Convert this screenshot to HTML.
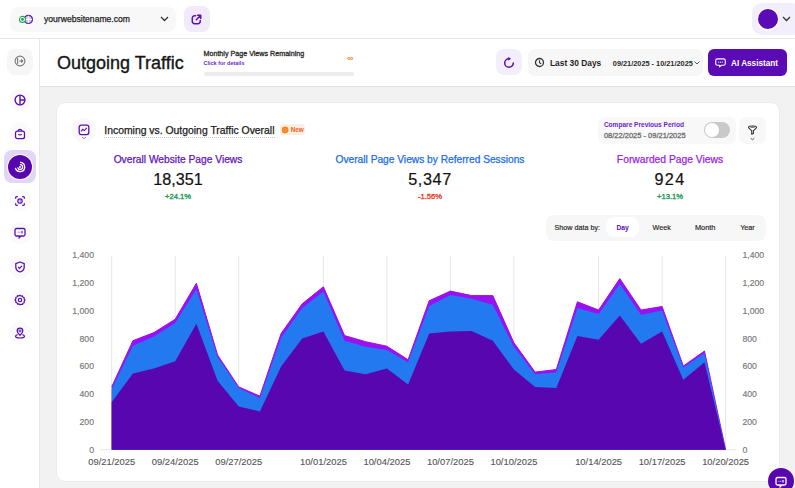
<!DOCTYPE html>
<html><head><meta charset="utf-8">
<style>
*{box-sizing:border-box;margin:0;padding:0}
html,body{width:795px;height:488px;overflow:hidden;background:#f2f2f2;font-family:"Liberation Sans",sans-serif;color:#1a1a1a}
.abs{position:absolute}
.t{position:absolute;white-space:nowrap;line-height:1}
#top{left:0;top:0;width:795px;height:39px;background:#fff;border-bottom:1px solid #e6e6e6}
#side{left:0;top:39px;width:40px;height:449px;background:#fff;border-right:1px solid #e8e8e8}
#hdr{left:40px;top:39px;width:755px;height:48px;background:#fff;border-bottom:1px solid #e3e3e3}
#card{left:56px;top:102.3px;width:723.5px;height:380px;background:#fff;border:1px solid #ececec;border-radius:9px}
</style></head><body>
<div id="top" class="abs"></div>
<div id="side" class="abs"></div>
<div id="hdr" class="abs"></div>
<div id="card" class="abs"></div>

<!-- top bar -->
<div class="abs" style="left:10px;top:6.5px;width:165.5px;height:25.8px;background:#f8f8f8;border-radius:8px"></div>
<svg class="abs" style="left:14px;top:11px" width="24" height="16" viewBox="0 0 24 16">
  <circle cx="14.4" cy="8.4" r="4" fill="#d5c2f3" stroke="#5b10b3" stroke-width="1.3"/>
  <path d="M14.4 4.6v7.6M10.6 8.4h7.6" stroke="#fff" stroke-width=".9"/>
  <circle cx="8.5" cy="8.4" r="3" fill="#fff" stroke="#22aa5a" stroke-width="1.1"/>
  <circle cx="8.5" cy="8.4" r="1.4" fill="#1a9a4c"/>
</svg>
<div class="t" style="left:44px;top:14.6px;font-size:8.6px;color:#1e1e1e;-webkit-text-stroke:.25px #1e1e1e">yourwebsitename.com</div>
<svg class="abs" style="left:160px;top:16px" width="9" height="6" viewBox="0 0 9 6"><path d="M1 1l3.5 3.5L8 1" fill="none" stroke="#333" stroke-width="1.3"/></svg>
<div class="abs" style="left:183.8px;top:6.2px;width:25.8px;height:26.2px;background:#f1eafc;border-radius:8px"></div>
<svg class="abs" style="left:191px;top:14px" width="11" height="11" viewBox="0 0 11 11"><path d="M4.6 1.8H3.6A2.3 2.3 0 0 0 1.3 4.1v3.3a2.3 2.3 0 0 0 2.3 2.3h3.3a2.3 2.3 0 0 0 2.3-2.3V6.4" fill="none" stroke="#5b10b3" stroke-width="1.5" stroke-linecap="round"/><path d="M6.6 1.3h3.1v3.1M9.5 1.5L5.3 5.7" fill="none" stroke="#5b10b3" stroke-width="1.5" stroke-linecap="round" stroke-linejoin="round"/></svg>
<div class="abs" style="left:751.6px;top:2.8px;width:50px;height:32.6px;background:#f3eefc;border-radius:10px"></div>
<div class="abs" style="left:756.8px;top:8.1px;width:22.6px;height:22.6px;border-radius:50%;background:#fff"></div>
<div class="abs" style="left:758.1px;top:9.4px;width:20px;height:20px;border-radius:50%;background:#5a0bb5"></div>
<svg class="abs" style="left:782px;top:16px" width="9" height="6" viewBox="0 0 9 6"><path d="M1 1l3.5 3.5L8 1" fill="none" stroke="#333" stroke-width="1.3"/></svg>

<!-- header -->
<div class="t" style="left:57px;top:54px;font-size:18px;color:#151515;-webkit-text-stroke:.35px #151515">Outgoing Traffic</div>
<div class="t" style="left:203.5px;top:51px;font-size:7.15px;color:#2a2a2a;-webkit-text-stroke:.3px #2a2a2a">Monthly Page Views Remaining</div>
<div class="t" style="left:203.5px;top:61px;font-size:5.5px;font-weight:700;color:#6a1fc8">Click for details</div>
<div class="t" style="left:347px;top:54px;font-size:9px;font-weight:700;color:#f08a24">∞</div>
<div class="abs" style="left:203.5px;top:72px;width:150px;height:4px;background:#ececec;border-radius:2px"></div>

<div class="abs" style="left:496.2px;top:49.4px;width:26.3px;height:26.1px;background:#f3eefc;border-radius:8px"></div>
<svg class="abs" style="left:502.4px;top:56.1px" width="14" height="14" viewBox="0 0 14 14"><path d="M7 2.7A4.3 4.3 0 1 0 11.3 7" fill="none" stroke="#5b10b3" stroke-width="1.5" stroke-linecap="round"/><path d="M6.2 1L9.2 2.7 6.2 4.4z" fill="#5b10b3"/></svg>
<div class="abs" style="left:528px;top:49px;width:175px;height:26.5px;background:#f7f7f7;border-radius:7px"></div>
<svg class="abs" style="left:533.6px;top:57px" width="11" height="11" viewBox="0 0 11 11"><circle cx="5.5" cy="5.5" r="4" fill="none" stroke="#333" stroke-width="1.3"/><path d="M5.5 3.2v2.5l1.7 1.1" fill="none" stroke="#333" stroke-width="1.1"/></svg>
<div class="t" style="left:550px;top:59px;font-size:8.4px;font-weight:700;color:#1e1e1e">Last 30 Days</div>
<div class="t" style="left:612.8px;top:59.5px;font-size:7.35px;font-weight:700;color:#2a2a2a">09/21/2025 - 10/21/2025</div>
<svg class="abs" style="left:694px;top:61px" width="6" height="4" viewBox="0 0 6 4"><path d="M.5 .5L3 3l2.5-2.5" fill="none" stroke="#444" stroke-width=".9"/></svg>
<div class="abs" style="left:708px;top:49px;width:78.5px;height:26.5px;background:#5a0bb5;border-radius:6px"></div>
<svg class="abs" style="left:714.5px;top:58px" width="11" height="10" viewBox="0 0 11 10"><path d="M2.6 .9h5.8a1.9 1.9 0 0 1 1.9 1.9v2.6a1.9 1.9 0 0 1-1.9 1.9H6.2L4.6 8.8V7.3h-2A1.9 1.9 0 0 1 .7 5.4V2.8A1.9 1.9 0 0 1 2.6.9z" fill="none" stroke="#fff" stroke-width="1.1" stroke-linejoin="round"/><circle cx="3.7" cy="4.1" r=".65" fill="#fff"/><circle cx="5.5" cy="4.1" r=".65" fill="#fff"/><circle cx="7.3" cy="4.1" r=".65" fill="#fff"/></svg>
<div class="t" style="left:731px;top:59.5px;font-size:8.2px;font-weight:700;color:#fff">AI Assistant</div>


<!-- sidebar -->
<div class="abs" style="left:7px;top:48.5px;width:26px;height:26px;background:#f6f6f6;border-radius:8px"></div>
<svg class="abs" style="left:14px;top:55px" width="12" height="12" viewBox="0 0 12 12"><circle cx="6" cy="6" r="4.9" fill="none" stroke="#7a7a7a" stroke-width="1.1"/><path d="M3.6 3v6M5.2 6h3.4M7.2 4.5L8.7 6 7.2 7.5" fill="none" stroke="#7a7a7a" stroke-width="1.1"/></svg>
<div class="abs" style="left:9px;top:88.5px;width:22px;height:22px;background:#fafafa;border-radius:50%"></div>
<svg class="abs" style="left:14px;top:93.5px" width="12" height="12" viewBox="0 0 12 12"><circle cx="6" cy="6" r="4.9" fill="none" stroke="#5b10b3" stroke-width="1.4"/><path d="M6 1v10M6 6h5" fill="none" stroke="#5b10b3" stroke-width="1.4"/></svg>
<div class="abs" style="left:9px;top:122.5px;width:22px;height:22px;background:#fafafa;border-radius:50%"></div>
<svg class="abs" style="left:14px;top:127.5px" width="12" height="12" viewBox="0 0 12 12"><rect x="1.5" y="3.2" width="9" height="7.5" rx="2" fill="none" stroke="#5b10b3" stroke-width="1.3"/><path d="M4.2 3.2a1.8 1.8 0 0 1 3.6 0M4.3 6.3q1.7 1.3 3.4 0" fill="none" stroke="#5b10b3" stroke-width="1.2"/></svg>
<div class="abs" style="left:4px;top:150.3px;width:31.6px;height:33px;background:#e2d6f7;border-radius:8px"></div>
<div class="abs" style="left:6.8px;top:153.6px;width:26px;height:26px;background:#fff;border-radius:50%"></div>
<div class="abs" style="left:7.8px;top:154.6px;width:24px;height:24px;background:#5806b0;border-radius:50%"></div>
<svg class="abs" style="left:13px;top:159.6px" width="14" height="14" viewBox="0 0 14 14"><path d="M7.6 2.3A4.7 4.7 0 1 1 2.5 8.4" fill="none" stroke="#fff" stroke-width="1.35" stroke-linecap="round"/><path d="M7.4 4.7A2.4 2.4 0 1 1 4.9 7.8" fill="none" stroke="#fff" stroke-width="1.3" stroke-linecap="round"/><circle cx="7" cy="7" r="1" fill="#fff"/></svg>
<div class="abs" style="left:9px;top:189px;width:22px;height:22px;background:#fafafa;border-radius:50%"></div>
<svg class="abs" style="left:14px;top:194.5px" width="12" height="12" viewBox="0 0 12 12"><g transform="translate(6 6) scale(.88) translate(-6 -6)"><path d="M1 3.5V2.2A1.2 1.2 0 0 1 2.2 1H3.5M8.5 1h1.3A1.2 1.2 0 0 1 11 2.2V3.5M11 8.5v1.3A1.2 1.2 0 0 1 9.8 11H8.5M3.5 11H2.2A1.2 1.2 0 0 1 1 9.8V8.5" fill="none" stroke="#5b10b3" stroke-width="1.45"/><circle cx="6" cy="6" r="2.5" fill="none" stroke="#5b10b3" stroke-width="1.4"/><path d="M6 4.8v1.3l.8.5" fill="none" stroke="#5b10b3" stroke-width=".8"/></g></svg>
<div class="abs" style="left:9px;top:221.5px;width:22px;height:22px;background:#fafafa;border-radius:50%"></div>
<svg class="abs" style="left:14px;top:226.5px" width="12" height="12" viewBox="0 0 12 12"><path d="M2.5 1.5h7a1.5 1.5 0 0 1 1.5 1.5v4.5a1.5 1.5 0 0 1-1.5 1.5H6.8L5.2 10.8V9H2.5A1.5 1.5 0 0 1 1 7.5V3a1.5 1.5 0 0 1 1.5-1.5z" fill="none" stroke="#5b10b3" stroke-width="1.3"/><path d="M3.8 5.2h.6M5.6 5.2h.6M8 4v2.4" stroke="#5b10b3" stroke-width="1.1"/></svg>
<div class="abs" style="left:9px;top:255.5px;width:22px;height:22px;background:#fafafa;border-radius:50%"></div>
<svg class="abs" style="left:14px;top:260.5px" width="12" height="12" viewBox="0 0 12 12"><path d="M6 1L10.2 2.6V6C10.2 8.4 8.4 10.2 6 11 3.6 10.2 1.8 8.4 1.8 6V2.6z" fill="none" stroke="#5b10b3" stroke-width="1.3" stroke-linejoin="round"/><path d="M4.2 6l1.3 1.3 2.4-2.4" fill="none" stroke="#5b10b3" stroke-width="1.2"/></svg>
<div class="abs" style="left:9px;top:288.5px;width:22px;height:22px;background:#fafafa;border-radius:50%"></div>
<svg class="abs" style="left:14px;top:293.5px" width="12" height="12" viewBox="0 0 12 12"><path d="M6 1.2l1.1.9 1.4-.2.5 1.3 1.3.5-.2 1.4.9 1.1-.9 1.1.2 1.4-1.3.5-.5 1.3-1.4-.2L6 10.8l-1.1-.9-1.4.2-.5-1.3-1.3-.5.2-1.4L1 6l.9-1.1-.2-1.4 1.3-.5.5-1.3 1.4.2z" fill="none" stroke="#5b10b3" stroke-width="1.2" stroke-linejoin="round"/><circle cx="6" cy="6" r="1.7" fill="none" stroke="#5b10b3" stroke-width="1.2"/></svg>
<div class="abs" style="left:9px;top:322px;width:22px;height:22px;background:#fafafa;border-radius:50%"></div>
<svg class="abs" style="left:14px;top:327px" width="12" height="12" viewBox="0 0 12 12"><path d="M6 8.3C4.3 6.6 3.2 5.3 3.2 3.9a2.8 2.8 0 0 1 5.6 0c0 1.4-1.1 2.7-2.8 4.4z" fill="none" stroke="#5b10b3" stroke-width="1.3"/><circle cx="6" cy="3.9" r="1" fill="none" stroke="#5b10b3" stroke-width="1"/><path d="M3.6 7.6C2.2 8 1.5 8.6 1.5 9.3c0 1 2 1.7 4.5 1.7s4.5-.7 4.5-1.7c0-.7-.7-1.3-2.1-1.7" fill="none" stroke="#5b10b3" stroke-width="1.2"/></svg>

<!-- card header -->
<div class="abs" style="left:72px;top:118.3px;width:24px;height:24px;background:#f8f8f8;border-radius:50%"></div>
<svg class="abs" style="left:78px;top:124px" width="12" height="16" viewBox="0 0 12 16"><rect x="1.2" y="1.2" width="9.6" height="9.4" rx="2" fill="none" stroke="#5b10b3" stroke-width="1.3"/><path d="M3 7.3l1.8-2 1.5 1.3L8.8 3.9" fill="none" stroke="#5b10b3" stroke-width="1.1"/><path d="M4 13l2 1.6L8 13" fill="none" stroke="#888" stroke-width=".9"/></svg>
<div class="t" style="left:104.3px;top:126px;font-size:10.4px;color:#1a1a1a;-webkit-text-stroke:.25px #1a1a1a">Incoming vs. Outgoing Traffic Overall</div>
<div class="abs" style="left:104.3px;top:137px;width:171px;height:0;border-top:1px dotted #c4c4c4"></div>
<div class="abs" style="left:280px;top:124.4px;width:25px;height:11px;background:#fdeee2;border-radius:3px"></div>
<svg class="abs" style="left:280px;top:124.9px" width="10" height="10" viewBox="0 0 10 10"><circle cx="5.1" cy="5" r="4.3" fill="#fff" opacity=".7"/><circle cx="5.1" cy="5" r="3.4" fill="#f5841f"/><circle cx="5.1" cy="5" r="1.6" fill="none" stroke="#f8a050" stroke-width=".6"/></svg>
<div class="t" style="left:290.8px;top:127.4px;font-size:6.3px;font-weight:700;color:#ef5f22">New</div>

<div class="abs" style="left:598.4px;top:116.7px;width:138px;height:27px;background:#f8f8f8;border-radius:7px"></div>
<div class="t" style="left:603.9px;top:122.3px;font-size:6.55px;font-weight:700;color:#6a1fc8">Compare Previous Period</div>
<div class="t" style="left:603.9px;top:131.5px;font-size:7.5px;color:#6e6e6e;-webkit-text-stroke:.3px #6e6e6e">08/22/2025 - 09/21/2025</div>
<div class="abs" style="left:704.2px;top:122px;width:26.3px;height:16.2px;background:#c9c9c9;border-radius:8.1px"></div>
<div class="abs" style="left:705.4px;top:123.2px;width:13.8px;height:13.8px;background:#fff;border-radius:50%"></div>
<div class="abs" style="left:739.4px;top:116.7px;width:26.3px;height:27px;background:#f8f8f8;border-radius:7px"></div>
<svg class="abs" style="left:747px;top:123.5px" width="11" height="18" viewBox="0 0 11 18"><path d="M1.4 3.3C1.4 1.5 9.6 1.5 9.6 3.3 9.6 4 8 5.2 6.4 6.6V9.4L4.7 10.2V6.6C3 5.2 1.4 4 1.4 3.3z" fill="#fff" stroke="#333" stroke-width="1.1" stroke-linejoin="round"/><ellipse cx="5.5" cy="3.1" rx="2.6" ry="1" fill="#777"/><path d="M3.7 14.2l1.8 1.5 1.8-1.5" fill="none" stroke="#444" stroke-width=".9"/></svg>

<!-- metrics -->
<div class="t" style="left:178px;top:154.5px;font-size:10.24px;color:#5e14c0;-webkit-text-stroke:.25px #5e14c0;transform:translateX(-50%)">Overall Website Page Views</div>
<div class="t" style="left:178px;top:171px;font-size:16.2px;color:#111;-webkit-text-stroke:.2px #111;transform:translateX(-50%)">18,351</div>
<div class="t" style="left:178px;top:193px;font-size:7.65px;color:#1f9a55;-webkit-text-stroke:.35px #1f9a55;transform:translateX(-50%)">+24.1%</div>
<div class="t" style="left:430px;top:154.5px;font-size:10.2px;color:#1b6cec;-webkit-text-stroke:.25px #1b6cec;transform:translateX(-50%)">Overall Page Views by Referred Sessions</div>
<div class="t" style="left:430px;top:171px;font-size:16.2px;color:#111;-webkit-text-stroke:.2px #111;transform:translateX(-50%);letter-spacing:.6px">5,347</div>
<div class="t" style="left:430px;top:193px;font-size:7.65px;color:#e8452a;-webkit-text-stroke:.35px #e8452a;transform:translateX(-50%)">-1.56%</div>
<div class="t" style="left:670px;top:154.5px;font-size:10.3px;color:#9a1fee;-webkit-text-stroke:.25px #9a1fee;transform:translateX(-50%)">Forwarded Page Views</div>
<div class="t" style="left:670px;top:171px;font-size:16.2px;color:#111;-webkit-text-stroke:.2px #111;transform:translateX(-50%);letter-spacing:1.3px">924</div>
<div class="t" style="left:670px;top:193px;font-size:7.65px;color:#1f9a55;-webkit-text-stroke:.35px #1f9a55;transform:translateX(-50%)">+13.1%</div>

<!-- show data by -->
<div class="abs" style="left:546px;top:214.7px;width:220px;height:26px;background:#f7f7f7;border-radius:8px"></div>
<div class="t" style="left:554.5px;top:223.6px;font-size:7.2px;color:#222;-webkit-text-stroke:.15px #222">Show data by:</div>
<div class="abs" style="left:605.5px;top:217.2px;width:33px;height:19.8px;background:#fff;border-radius:8px"></div>
<div class="t" style="left:616.4px;top:224.5px;font-size:6.8px;font-weight:700;color:#5b10b3">Day</div>
<div class="t" style="left:652.6px;top:223.6px;font-size:7.2px;color:#222;-webkit-text-stroke:.15px #222">Week</div>
<div class="t" style="left:694.9px;top:223.6px;font-size:7.4px;color:#222;-webkit-text-stroke:.15px #222">Month</div>
<div class="t" style="left:740.2px;top:224.45px;font-size:7.2px;color:#222;-webkit-text-stroke:.15px #222">Year</div>

<!-- chart -->
<svg class="abs" style="left:0;top:0" width="795" height="488" viewBox="0 0 795 488">
<line x1="111.7" y1="256" x2="111.7" y2="449.7" stroke="#e6e6e6" stroke-width="1"/><line x1="175.2" y1="256" x2="175.2" y2="449.7" stroke="#e6e6e6" stroke-width="1"/><line x1="238.7" y1="256" x2="238.7" y2="449.7" stroke="#e6e6e6" stroke-width="1"/><line x1="323.4" y1="256" x2="323.4" y2="449.7" stroke="#e6e6e6" stroke-width="1"/><line x1="386.9" y1="256" x2="386.9" y2="449.7" stroke="#e6e6e6" stroke-width="1"/><line x1="450.4" y1="256" x2="450.4" y2="449.7" stroke="#e6e6e6" stroke-width="1"/><line x1="513.9" y1="256" x2="513.9" y2="449.7" stroke="#e6e6e6" stroke-width="1"/><line x1="598.6" y1="256" x2="598.6" y2="449.7" stroke="#e6e6e6" stroke-width="1"/><line x1="662.1" y1="256" x2="662.1" y2="449.7" stroke="#e6e6e6" stroke-width="1"/><line x1="725.6" y1="256" x2="725.6" y2="449.7" stroke="#e6e6e6" stroke-width="1"/>
<line x1="100" y1="449.7" x2="736" y2="449.7" stroke="#e6e6e6" stroke-width="1"/>
<polygon points="111.7,449.7 111.7,386.9 132.9,340.7 154.0,332.5 175.2,319.2 196.4,283.3 217.6,355.0 238.7,386.9 259.9,396.1 281.1,333.5 302.2,303.8 323.4,286.8 344.6,335.6 365.7,341.7 386.9,346.2 408.1,359.7 429.2,300.7 450.4,291.1 471.6,295.6 492.8,295.6 513.9,342.7 535.1,372.1 556.3,369.5 577.4,301.8 598.6,310.0 619.8,278.6 641.0,310.0 662.1,306.5 683.3,366.0 704.5,351.0 725.6,449.7 725.6,449.7" fill="#9a10f0"/>
<polyline points="111.7,386.9 132.9,340.7 154.0,332.5 175.2,319.2 196.4,283.3 217.6,355.0 238.7,386.9 259.9,396.1 281.1,333.5 302.2,303.8 323.4,286.8 344.6,335.6 365.7,341.7 386.9,346.2 408.1,359.7 429.2,300.7 450.4,291.1 471.6,295.6 492.8,295.6 513.9,342.7 535.1,372.1 556.3,369.5 577.4,301.8 598.6,310.0 619.8,278.6 641.0,310.0 662.1,306.5 683.3,366.0 704.5,351.0 725.6,449.7" fill="none" stroke="#9a10f0" stroke-width="1" stroke-linejoin="round"/>
<polygon points="111.7,449.7 111.7,388.9 132.9,345.8 154.0,336.6 175.2,322.9 196.4,288.9 217.6,357.1 238.7,387.9 259.9,398.2 281.1,337.6 302.2,307.9 323.4,291.5 344.6,340.7 365.7,346.8 386.9,349.9 408.1,362.3 429.2,305.9 450.4,295.0 471.6,298.7 492.8,304.8 513.9,346.8 535.1,374.2 556.3,372.5 577.4,307.9 598.6,314.1 619.8,283.9 641.0,314.7 662.1,310.6 683.3,367.4 704.5,353.0 725.6,449.7 725.6,449.7" fill="#2379ef"/>
<polygon points="111.7,449.7 111.7,402.3 132.9,373.6 154.0,368.4 175.2,361.3 196.4,323.7 217.6,380.7 238.7,406.4 259.9,411.5 281.1,366.4 302.2,338.6 323.4,331.5 344.6,370.5 365.7,374.2 386.9,368.4 408.1,384.6 429.2,333.5 450.4,331.5 471.6,331.1 492.8,340.7 513.9,369.5 535.1,386.9 556.3,387.9 577.4,336.0 598.6,339.7 619.8,315.5 641.0,343.8 662.1,331.5 683.3,379.7 704.5,362.3 725.6,449.7 725.6,449.7" fill="#5806b0"/>
</svg>
<div class="t" style="right:701px;top:445.6px;font-size:8.7px;color:#777;-webkit-text-stroke:.15px #777">0</div><div class="t" style="left:742.4px;top:445.6px;font-size:8.7px;color:#777;-webkit-text-stroke:.15px #777">0</div><div class="t" style="right:701px;top:417.8px;font-size:8.7px;color:#777;-webkit-text-stroke:.15px #777">200</div><div class="t" style="left:742.4px;top:417.8px;font-size:8.7px;color:#777;-webkit-text-stroke:.15px #777">200</div><div class="t" style="right:701px;top:390.1px;font-size:8.7px;color:#777;-webkit-text-stroke:.15px #777">400</div><div class="t" style="left:742.4px;top:390.1px;font-size:8.7px;color:#777;-webkit-text-stroke:.15px #777">400</div><div class="t" style="right:701px;top:362.3px;font-size:8.7px;color:#777;-webkit-text-stroke:.15px #777">600</div><div class="t" style="left:742.4px;top:362.3px;font-size:8.7px;color:#777;-webkit-text-stroke:.15px #777">600</div><div class="t" style="right:701px;top:334.5px;font-size:8.7px;color:#777;-webkit-text-stroke:.15px #777">800</div><div class="t" style="left:742.4px;top:334.5px;font-size:8.7px;color:#777;-webkit-text-stroke:.15px #777">800</div><div class="t" style="right:701px;top:306.7px;font-size:8.7px;color:#777;-webkit-text-stroke:.15px #777">1,000</div><div class="t" style="left:742.4px;top:306.7px;font-size:8.7px;color:#777;-webkit-text-stroke:.15px #777">1,000</div><div class="t" style="right:701px;top:279.0px;font-size:8.7px;color:#777;-webkit-text-stroke:.15px #777">1,200</div><div class="t" style="left:742.4px;top:279.0px;font-size:8.7px;color:#777;-webkit-text-stroke:.15px #777">1,200</div><div class="t" style="right:701px;top:251.2px;font-size:8.7px;color:#777;-webkit-text-stroke:.15px #777">1,400</div><div class="t" style="left:742.4px;top:251.2px;font-size:8.7px;color:#777;-webkit-text-stroke:.15px #777">1,400</div>
<div class="t" style="left:111.7px;top:456.5px;font-size:9.4px;color:#555;-webkit-text-stroke:.12px #555;transform:translateX(-50%)">09/21/2025</div><div class="t" style="left:175.2px;top:456.5px;font-size:9.4px;color:#555;-webkit-text-stroke:.12px #555;transform:translateX(-50%)">09/24/2025</div><div class="t" style="left:238.7px;top:456.5px;font-size:9.4px;color:#555;-webkit-text-stroke:.12px #555;transform:translateX(-50%)">09/27/2025</div><div class="t" style="left:323.4px;top:456.5px;font-size:9.4px;color:#555;-webkit-text-stroke:.12px #555;transform:translateX(-50%)">10/01/2025</div><div class="t" style="left:386.9px;top:456.5px;font-size:9.4px;color:#555;-webkit-text-stroke:.12px #555;transform:translateX(-50%)">10/04/2025</div><div class="t" style="left:450.4px;top:456.5px;font-size:9.4px;color:#555;-webkit-text-stroke:.12px #555;transform:translateX(-50%)">10/07/2025</div><div class="t" style="left:513.9px;top:456.5px;font-size:9.4px;color:#555;-webkit-text-stroke:.12px #555;transform:translateX(-50%)">10/10/2025</div><div class="t" style="left:598.6px;top:456.5px;font-size:9.4px;color:#555;-webkit-text-stroke:.12px #555;transform:translateX(-50%)">10/14/2025</div><div class="t" style="left:662.1px;top:456.5px;font-size:9.4px;color:#555;-webkit-text-stroke:.12px #555;transform:translateX(-50%)">10/17/2025</div><div class="t" style="left:725.6px;top:456.5px;font-size:9.4px;color:#555;-webkit-text-stroke:.12px #555;transform:translateX(-50%)">10/20/2025</div>
<div class="abs" style="left:768px;top:467.8px;width:26px;height:26px;background:#5806b0;border-radius:50%"></div>
<svg class="abs" style="left:775px;top:475.5px" width="12" height="12" viewBox="0 0 12 12"><path d="M2.5 1.5h7a1.5 1.5 0 0 1 1.5 1.5v4.5a1.5 1.5 0 0 1-1.5 1.5H6.8L5.2 10.8V9H2.5A1.5 1.5 0 0 1 1 7.5V3a1.5 1.5 0 0 1 1.5-1.5z" fill="none" stroke="#fff" stroke-width="1.3"/><path d="M3.6 5.3h.7M5.5 5.3h.7M8 4v2.6" stroke="#fff" stroke-width="1.2"/></svg>
</body></html>
